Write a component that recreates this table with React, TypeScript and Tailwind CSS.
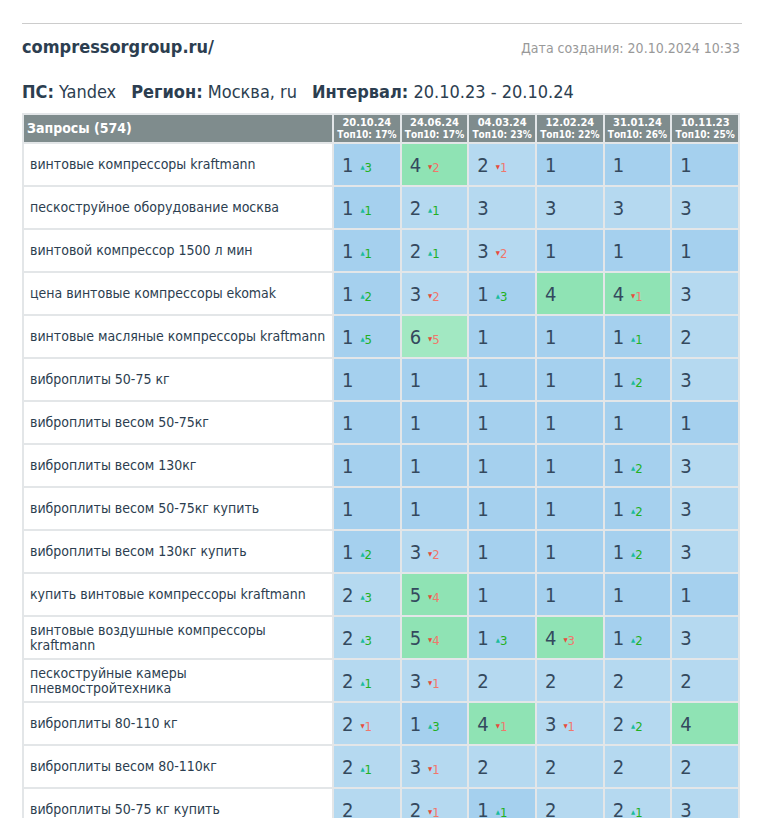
type Cell = [number, number?];

const dates = [
  ["20.10.24", "17%"],
  ["24.06.24", "17%"],
  ["04.03.24", "23%"],
  ["12.02.24", "22%"],
  ["31.01.24", "26%"],
  ["10.11.23", "25%"],
];

const rows: { q: string; c: Cell[] }[] = [
  { q: "винтовые компрессоры kraftmann", c: [[1, 3], [4, -2], [2, -1], [1], [1], [1]] },
  { q: "пескоструйное оборудование москва", c: [[1, 1], [2, 1], [3], [3], [3], [3]] },
  { q: "винтовой компрессор 1500 л мин", c: [[1, 1], [2, 1], [3, -2], [1], [1], [1]] },
  { q: "цена винтовые компрессоры ekomak", c: [[1, 2], [3, -2], [1, 3], [4], [4, -1], [3]] },
  { q: "винтовые масляные компрессоры kraftmann", c: [[1, 5], [6, -5], [1], [1], [1, 1], [2]] },
  { q: "виброплиты 50-75 кг", c: [[1], [1], [1], [1], [1, 2], [3]] },
  { q: "виброплиты весом 50-75кг", c: [[1], [1], [1], [1], [1], [1]] },
  { q: "виброплиты весом 130кг", c: [[1], [1], [1], [1], [1, 2], [3]] },
  { q: "виброплиты весом 50-75кг купить", c: [[1], [1], [1], [1], [1, 2], [3]] },
  { q: "виброплиты весом 130кг купить", c: [[1, 2], [3, -2], [1], [1], [1, 2], [3]] },
  { q: "купить винтовые компрессоры kraftmann", c: [[2, 3], [5, -4], [1], [1], [1], [1]] },
  { q: "винтовые воздушные компрессоры kraftmann", c: [[2, 3], [5, -4], [1, 3], [4, -3], [1, 2], [3]] },
  { q: "пескоструйные камеры пневмостройтехника", c: [[2, 1], [3, -1], [2], [2], [2], [2]] },
  { q: "виброплиты 80-110 кг", c: [[2, -1], [1, 3], [4, -1], [3, -1], [2, 2], [4]] },
  { q: "виброплиты весом 80-110кг", c: [[2, 1], [3, -1], [2], [2], [2], [2]] },
  { q: "виброплиты 50-75 кг купить", c: [[2], [2, -1], [1, 1], [2], [2, 1], [3]] },
];

const bg = (p: number) =>
  p === 1 ? "bg-[#a5d0ee]" : p <= 3 ? "bg-[#b5d9f0]" : p <= 5 ? "bg-[#8fe3b4]" : "bg-[#a2e8c2]";

function Pos({ cell }: { cell: Cell }) {
  const [p, d] = cell;
  return (
    <td className={`${bg(p)} border-2 border-[#e3e6e8] pl-[8px] align-middle whitespace-nowrap`}>
      <span className="text-[20px] text-[#34495e]">{p}</span>
      {d !== undefined && (
        <span className="ml-[7px] text-[13px]">
          {d > 0 ? (
            <>
              <span className="inline-block -translate-y-[3px] text-[6px] text-[#1abc9c]">▲</span>
              <span className="text-[#22b022]">{d}</span>
            </>
          ) : (
            <>
              <span className="inline-block -translate-y-[3px] text-[6px] text-[#e74c3c]">▼</span>
              <span className="text-[#f0776c]">{-d}</span>
            </>
          )}
        </span>
      )}
    </td>
  );
}

export default function App() {
  return (
    <div className="w-[764px] h-[818px] overflow-hidden bg-white px-[22px] pt-[23px] text-[#2c3e50] font-['DejaVu_Sans_Condensed','DejaVu_Sans',sans-serif]">
      <div className="border-t border-[#cccccc]" />
      <div className="flex items-baseline justify-between pt-[9px] pr-[2px]">
        <span className="text-[18px] font-bold">compressorgroup.ru/</span>
        <span className="text-[14px] text-[#999999]">Дата создания: 20.10.2024 10:33</span>
      </div>
      <div className="pt-[18px] text-[18px] flex gap-[15px]">
        <span><b>ПС:</b> Yandex</span>
        <span><b>Регион:</b> Москва, ru</span>
        <span><b>Интервал:</b> 20.10.23 - 20.10.24</span>
      </div>
      <table className="mt-[8px] w-[718px] border-collapse table-fixed">
        <colgroup>
          <col className="w-[310px]" />
          {dates.map((d) => (
            <col key={d[0]} />
          ))}
        </colgroup>
        <thead>
          <tr className="h-[29px] bg-[#7f8c8d] text-white">
            <th className="border-2 border-[#e3e6e8] text-left pl-[3px] text-[14px] font-bold">Запросы (574)</th>
            {dates.map(([d, t]) => (
              <th key={d} className="border-2 border-[#e3e6e8] text-center font-bold leading-[12px]">
                <div className="text-[11px]">{d}</div>
                <div className="text-[10px]">Топ10: {t}</div>
              </th>
            ))}
          </tr>
        </thead>
        <tbody>
          {rows.map((r) => (
            <tr key={r.q} className="h-[43px]">
              <td className="border-2 border-[#e3e6e8] pl-[6px] pr-[6px] text-[14px] leading-[15px]">{r.q}</td>
              {r.c.map((c, i) => (
                <Pos key={i} cell={c} />
              ))}
            </tr>
          ))}
        </tbody>
      </table>
    </div>
  );
}
